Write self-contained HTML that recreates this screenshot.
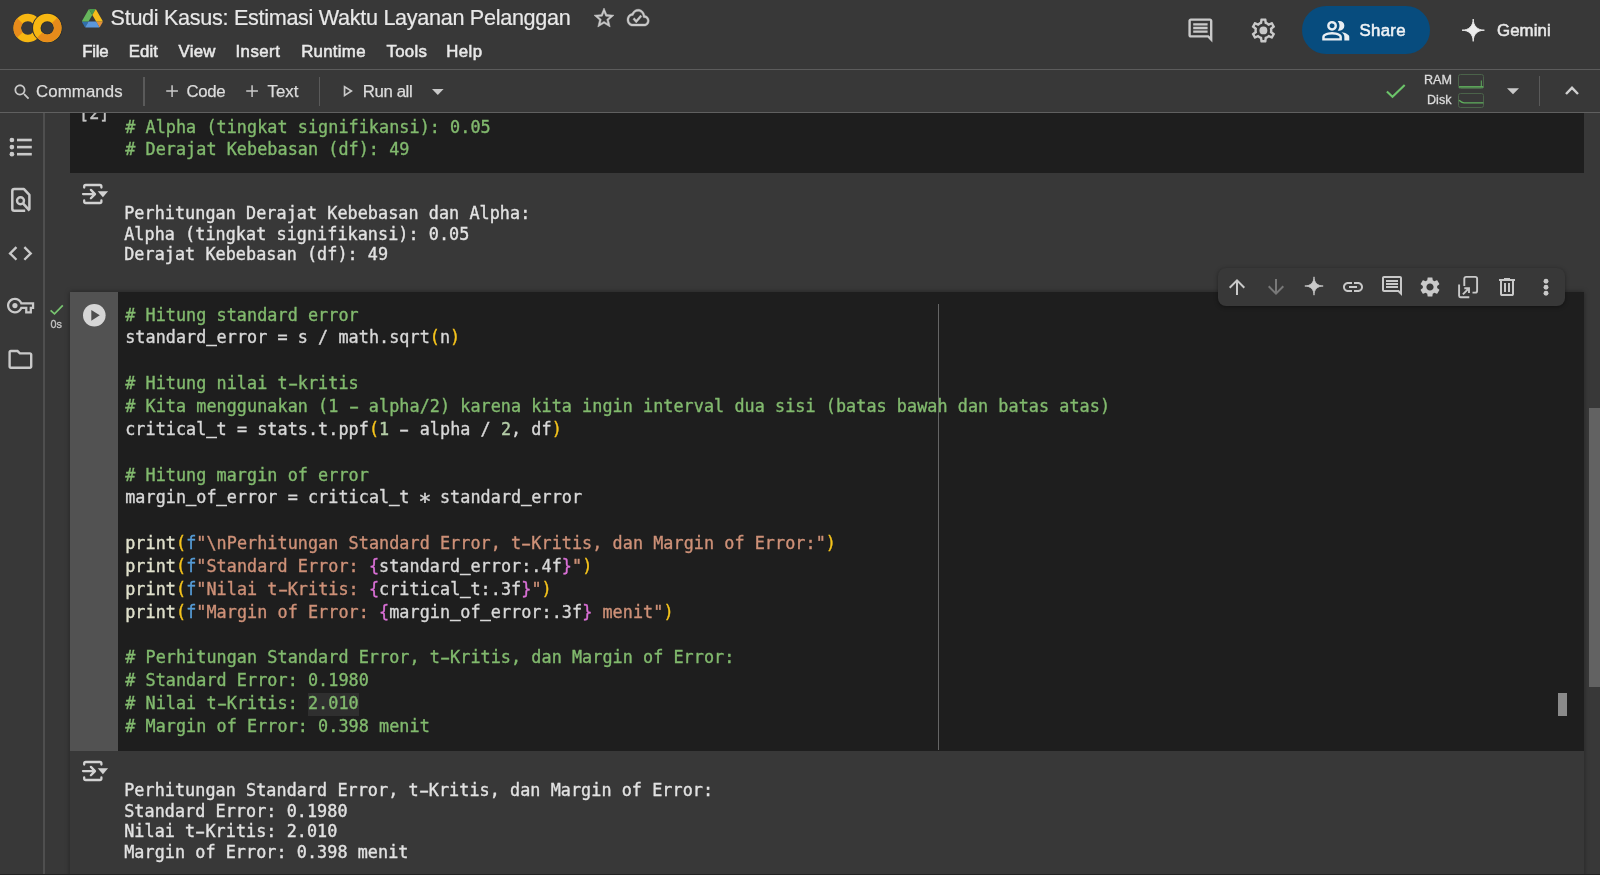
<!DOCTYPE html>
<html lang="id">
<head>
<meta charset="utf-8">
<title>Studi Kasus: Estimasi Waktu Layanan Pelanggan</title>
<style>
*{box-sizing:border-box;margin:0;padding:0}
html,body{width:1600px;height:875px;overflow:hidden;background:#383838}
body{position:relative;will-change:transform;font-family:"Liberation Sans",sans-serif;color:#e3e3e3}
.abs{position:absolute}
.t{position:absolute;white-space:pre;line-height:1}
svg{position:absolute;overflow:visible}
.ic{fill:#c9c9c9}
/* header */
#hdr{position:absolute;left:0;top:0;width:1600px;height:69px;background:#383838}
#hline{position:absolute;left:0;top:68.800px;width:1600px;height:1px;background:#5c5c5c}
#tbar{position:absolute;left:0;top:70px;width:1600px;height:42px;background:#383838}
#tline{position:absolute;left:0;top:112px;width:1600px;height:1.400px;background:#606060;z-index:5}
.menu{font-size:16.8px;font-weight:400;color:#e8e8e8;top:44.2px;-webkit-text-stroke:0.55px #e8e8e8}
.tb{font-size:16.8px;color:#dcdcdc;top:84.1px;-webkit-text-stroke:0.25px #dcdcdc}
/* sidebar */
#side{position:absolute;left:0;top:113px;width:43px;height:762px;background:#383838}
#sline{position:absolute;left:43px;top:113px;width:2px;height:762px;background:#4f4f4f}
/* cells */
.mono{font-family:"DejaVu Sans Mono","Liberation Mono",monospace;font-size:16.8px;white-space:pre;letter-spacing:0.05px;-webkit-text-stroke:0.36px currentColor}
.cell{position:absolute;left:70px;width:1514px;background:#1e1e1e}
.code{position:absolute;left:125.2px;white-space:normal}
.code div{height:22.85px;line-height:22.85px;white-space:pre}
.out{position:absolute;left:124.2px;color:#e2e2e2}
.h{display:inline-block;transform:scaleX(1.75)}
.u{display:inline-block;transform:translateY(-1px);-webkit-text-stroke:0.8px currentColor}
.a{display:inline-block;transform:translateY(4.600px) scale(1.280)}
.c{color:#82ba6e}
.d{color:#d8d8d8}
.y{color:#f6c41c}
.fn{color:#e0e1cc}
.b{color:#569cd6}
.s{color:#ce9178}
.p{color:#da70d6}
.n{color:#b5cea8}
</style>
</head>
<body>
<!--HEADER-->
<div id="hdr"></div>
<!-- colab logo -->
<svg style="left:0;top:0" width="80" height="60" viewBox="0 0 80 60">
  <g fill="none" stroke-width="7.5">
    <!-- C : yellow full arc, orange left segment -->
    <path d="M35.55 20.88 A10.5 10.5 0 1 0 35.55 34.92" stroke="#F7B712"/>
    <path d="M19.95 20.87 A10.5 10.5 0 0 0 19.95 34.93" stroke="#E78B1B"/>
    <!-- O -->
    <circle cx="47.3" cy="27.9" r="10.5" stroke="#2f2f2f" stroke-width="9.3"/>
    <circle cx="47.3" cy="27.9" r="10.5" stroke="#F7B712"/>
    <path d="M54.6 20.35 A10.5 10.5 0 0 1 39.75 35.2" stroke="#E78B1B"/>
  </g>
</svg>
<!-- drive icon -->
<svg style="left:82.3px;top:8.5px" width="20.7" height="18.5" viewBox="0 0 87.3 78">
  <path d="m6.6 66.85 3.85 6.65c.8 1.4 1.95 2.5 3.3 3.3l13.75-23.8h-27.5c0 1.55.4 3.1 1.2 4.5z" fill="#2f6fab"/>
  <path d="m43.65 25-13.75-23.8c-1.35.8-2.5 1.9-3.3 3.3l-25.4 44a9.06 9.06 0 0 0 -1.2 4.5h27.5z" fill="#66b55c"/>
  <path d="m73.55 76.8c1.35-.8 2.5-1.9 3.3-3.3l1.6-2.750 7.650-13.250c.8-1.400 1.200-2.950 1.200-4.500h-27.502l5.852 11.500z" fill="#e1913d"/>
  <path d="m43.65 25 13.750-23.800c-1.350-.8-2.900-1.200-4.500-1.200h-18.500c-1.600 0-3.150.45-4.500 1.200z" fill="#4a9a4e"/>
  <path d="m59.800 53h-32.300l-13.750 23.800c1.350.8 2.900 1.200 4.500 1.200h50.800c1.600 0 3.150-.45 4.500-1.200z" fill="#5b97db"/>
  <path d="m73.400 26.500-12.700-22c-.8-1.400-1.950-2.500-3.300-3.300l-13.750 23.800 16.150 28h27.450c0-1.550-.4-3.100-1.200-4.500z" fill="#f6bd1b"/>
</svg>
<span class="t" id="title" style="left:110.6px;top:7.3px;font-size:21.6px;letter-spacing:-0.3px;color:#e8e8e8;-webkit-text-stroke:0.2px #e8e8e8">Studi Kasus: Estimasi Waktu Layanan Pelanggan</span>
<!-- star -->
<svg class="ic" style="left:592.1px;top:6.2px;stroke:#c9c9c9;stroke-width:0.5" width="24" height="24" viewBox="0 0 24 24"><path d="M22 9.24l-7.19-.62L12 2 9.190 8.630 2 9.240l5.460 4.730L5.820 21 12 17.270 18.180 21l-1.630-7.030L22 9.240zM12 15.400l-3.760 2.270 1-4.280-3.320-2.880 4.380-.38L12 6.100l1.710 4.040 4.380.38-3.320 2.880 1 4.280L12 15.400z"/></svg>
<!-- cloud done -->
<svg class="ic" style="left:627.1px;top:5.2px;stroke:#c9c9c9;stroke-width:0.4" width="22.2" height="25.3" preserveAspectRatio="none" viewBox="0 0 24 24"><path d="M19.350 10.040C18.670 6.590 15.640 4 12 4 9.110 4 6.600 5.640 5.350 8.040 2.340 8.360 0 10.910 0 14c0 3.310 2.690 6 6 6h13c2.760 0 5-2.240 5-5 0-2.640-2.050-4.780-4.650-4.960zM19 18H6c-2.210 0-4-1.790-4-4 0-2.050 1.530-3.760 3.560-3.970l1.070-.11.5-.95C8.080 7.140 9.940 6 12 6c2.620 0 4.880 1.860 5.390 4.430l.3 1.500 1.530.11c1.560.1 2.780 1.410 2.780 2.960 0 1.650-1.350 3-3 3zm-9-3.820l-2.090-2.090L6.500 13.500 10 17l6.010-6.010-1.410-1.410z"/></svg>
<!-- menus -->
<span class="t menu" style="left:82.2px;letter-spacing:-0.25px">File</span>
<span class="t menu" style="left:128.8px;letter-spacing:0.05px">Edit</span>
<span class="t menu" style="left:178.6px;letter-spacing:0.22px">View</span>
<span class="t menu" style="left:235.4px;letter-spacing:0.5px">Insert</span>
<span class="t menu" style="left:301.2px;letter-spacing:0.3px">Runtime</span>
<span class="t menu" style="left:386.4px;letter-spacing:0.35px">Tools</span>
<span class="t menu" style="left:446.2px;letter-spacing:0.45px">Help</span>
<!-- comment icon -->
<svg class="ic" style="left:1186.2px;top:15.6px" width="28.8" height="28.8" viewBox="0 0 24 24"><path d="M21.990 4c0-1.100-.89-2-1.990-2H4c-1.100 0-2 .9-2 2v12c0 1.100.9 2 2 2h14l4 4-.01-18zM20 4v13.170L18.830 16H4V4h16zM6 12h12v2H6zm0-3h12v2H6zm0-3h12v2H6z"/></svg>
<!-- gear -->
<svg class="ic" style="left:1248.6px;top:15.6px" width="28.8" height="28.8" viewBox="0 0 24 24"><path d="M19.430 12.980c.04-.32.07-.64.07-.98 0-.34-.03-.66-.07-.98l2.110-1.650c.19-.15.24-.42.12-.64l-2-3.460c-.09-.16-.26-.25-.44-.25-.06 0-.12.010-.17.030l-2.490 1c-.52-.4-1.080-.73-1.690-.98l-.38-2.650C14.460 2.180 14.250 2 14 2h-4c-.25 0-.46.180-.49.420l-.38 2.650c-.61.250-1.170.59-1.690.98l-2.490-1c-.06-.02-.12-.03-.18-.03-.17 0-.34.090-.43.250l-2 3.460c-.13.220-.07.490.12.640l2.110 1.650c-.04.320-.07.650-.07.980 0 .33.030.66.070.98l-2.110 1.650c-.19.150-.24.420-.12.640l2 3.460c.09.160.26.250.44.250.06 0 .12-.01.170-.03l2.490-1c.52.4 1.080.73 1.690.98l.38 2.650c.03.240.24.420.49.420h4c.25 0 .46-.18.490-.42l.38-2.650c.61-.25 1.170-.59 1.690-.98l2.490 1c.06.020.12.030.18.030.17 0 .34-.09.430-.25l2-3.460c.12-.22.070-.49-.12-.64l-2.110-1.650zm-1.980-1.710c.04.310.05.520.05.730 0 .21-.02.430-.05.730l-.14 1.130.89.700 1.080.84-.7 1.210-1.270-.51-1.040-.42-.9.680c-.43.320-.84.560-1.250.73l-1.060.43-.16 1.130-.2 1.350h-1.400l-.19-1.350-.16-1.130-1.060-.43c-.43-.18-.83-.41-1.230-.71l-.91-.7-1.060.43-1.270.51-.7-1.210 1.080-.84.890-.7-.14-1.130c-.03-.31-.05-.54-.05-.74s.02-.43.050-.73l.14-1.130-.89-.7-1.080-.84.700-1.210 1.270.51 1.040.42.900-.68c.43-.32.840-.56 1.250-.73l1.060-.43.160-1.130.2-1.350h1.390l.19 1.350.16 1.130 1.060.43c.43.180.83.410 1.230.71l.91.700 1.060-.43 1.270-.51.700 1.210-1.070.85-.89.700.14 1.130z"/><circle cx="12" cy="12" r="3.3"/></svg>
<!-- share -->
<div class="abs" style="left:1302px;top:6px;width:128px;height:48px;border-radius:24px;background:#074c7e"></div>
<svg style="left:1320.8px;top:15.7px;fill:#e9eef3" width="29.5" height="29.5" viewBox="0 0 24 24"><path d="M1 20v-2.800q0-.85.438-1.562T2.600 14.550q1.550-.775 3.150-1.162T9 13t3.250.388 3.150 1.162q.725.375 1.163 1.088T17 17.200V20zm18 0v-3q0-1.100-.612-2.113T16.650 13.150q1.275.15 2.400.513t2.100.887q.9.500 1.375 1.112T23 17v3zM9 12q-1.650 0-2.825-1.175T5 8t1.175-2.825T9 4t2.825 1.175T13 8t-1.175 2.825T9 12m10-4q0 1.650-1.175 2.825T15 12q-.275 0-.7-.062t-.7-.138q.675-.8 1.038-1.775T15 8t-.362-2.025T13.600 4.200q.35-.125.700-.163T15 4q1.650 0 2.825 1.175T19 8M3 18h12v-.8q0-.275-.137-.5t-.363-.35q-1.350-.675-2.725-1.012T9 15t-2.775.338T3.500 16.350q-.225.125-.363.350T3 17.200zm6-8q.825 0 1.413-.587T11 8t-.587-1.412T9 6t-1.412.588T7 8t.588 1.413T9 10"/></svg>
<span class="t" style="left:1359.6px;top:22.8px;font-size:16.8px;font-weight:400;letter-spacing:0.3px;color:#f0f3f6;-webkit-text-stroke:0.55px #f0f3f6">Share</span>
<!-- gemini -->
<svg style="left:1460.6px;top:17.8px;fill:#ececec;stroke:#ececec;stroke-width:0.9;stroke-linejoin:round" width="24.4" height="24.4" viewBox="0 0 24 24"><path d="M12 1C12 7.800 16.200 12 23 12C16.200 12 12 16.200 12 23C12 16.200 7.800 12 1 12C7.800 12 12 7.800 12 1Z"/></svg>
<span class="t" style="left:1497px;top:22.8px;font-size:16.8px;font-weight:400;letter-spacing:0.1px;color:#e8e8e8;-webkit-text-stroke:0.55px #e8e8e8">Gemini</span>
<div id="hline"></div>
<!--/HEADER-->
<!--TOOLBAR-->
<div id="tbar"></div>
<svg class="ic" style="left:11.5px;top:81.5px" width="20.16" height="20.16" viewBox="0 0 24 24"><path d="M15.500 14h-.79l-.28-.27C15.410 12.590 16 11.110 16 9.500 16 5.910 13.090 3 9.500 3S3 5.910 3 9.500 5.910 16 9.500 16c1.610 0 3.090-.59 4.230-1.570l.27.28v.79l5 4.990L20.490 19l-4.990-5zm-6 0C7.010 14 5 11.990 5 9.500S7.010 5 9.500 5 14 7.010 14 9.500 11.990 14 9.500 14z"/></svg>
<span class="t tb" style="left:36px;letter-spacing:0.12px">Commands</span>
<div class="abs" style="left:143.4px;top:76.5px;width:1.4px;height:29px;background:#5a5a5a"></div>
<!-- + Code -->
<svg class="ic" style="left:161.9px;top:80.7px" width="20.16" height="20.16" viewBox="0 0 24 24"><path d="M19 12.900h-6.100V19h-1.800v-6.100H5v-1.800h6.100V5h1.800v6.100H19z"/></svg>
<span class="t tb" style="left:186.4px;letter-spacing:-0.3px">Code</span>
<svg class="ic" style="left:242.1px;top:80.700px" width="20.16" height="20.16" viewBox="0 0 24 24"><path d="M19 12.900h-6.100V19h-1.800v-6.100H5v-1.800h6.100V5h1.800v6.100H19z"/></svg>
<span class="t tb" style="left:267.6px">Text</span>
<div class="abs" style="left:319px;top:77px;width:1.4px;height:28.500px;background:#5a5a5a"></div>
<!-- run all -->
<svg class="ic" style="left:337.2px;top:80.9px" width="20.16" height="20.16" viewBox="0 0 24 24"><path d="M10 8.640L15.270 12 10 15.360V8.640M8 5v14l11-7L8 5z"/></svg>
<span class="t tb" style="left:362.8px;letter-spacing:-0.4px">Run all</span>
<svg class="ic" style="left:431.600px;top:88.6px" width="11.6" height="6" viewBox="0 0 10 5"><path d="M0 0l5 5 5-5z"/></svg>
<!-- right side -->
<svg style="left:1385.5px;top:83.600px" width="20" height="14.600" viewBox="0 0 20 14.600"><path d="M0.900 7.400L6.500 12.700L18.700 1" fill="none" stroke="#6cc46a" stroke-width="2.100"/></svg>
<span class="t" style="left:1424px;top:74.3px;font-size:12.6px;color:#dcdcdc;-webkit-text-stroke:0.3px #dcdcdc">RAM</span>
<span class="t" style="left:1427px;top:93.600px;font-size:12.6px;color:#dcdcdc;-webkit-text-stroke:0.3px #dcdcdc">Disk</span>
<div class="abs" style="left:1458px;top:73.600px;width:26.400px;height:15.200px;border:1px solid #4b634a;border-radius:2.500px"></div>
<svg style="left:1458px;top:73.600px" width="26.400" height="15.200" viewBox="0 0 26.4 15.2"><path d="M1 12.900H25.400" fill="none" stroke="#5fae5d" stroke-width="1.600"/><path d="M23.300 12.500V6.500" fill="none" stroke="#5fae5d" stroke-width="1"/></svg>
<div class="abs" style="left:1458px;top:93px;width:26.400px;height:15.200px;border:1px solid #4b634a;border-radius:2.500px"></div>
<svg style="left:1458px;top:93px" width="26.400" height="15.200" viewBox="0 0 26.4 15.2"><path d="M1 7.200C2.500 8.500 4 9.800 6 9.900H25.400" fill="none" stroke="#5fae5d" stroke-width="1.400"/></svg>
<svg class="ic" style="left:1507.300px;top:88px" width="12" height="6.500" viewBox="0 0 10 5"><path d="M0 0l5 5 5-5z"/></svg>
<div class="abs" style="left:1538.600px;top:76px;width:1.400px;height:30px;background:#5a5a5a"></div>
<svg style="left:1565.200px;top:86.300px" width="14" height="9" viewBox="0 0 14 9"><path d="M1 8L7 1.800L13 8" fill="none" stroke="#d0d0d0" stroke-width="2.400"/></svg>
<div id="tline"></div>
<!--/TOOLBAR-->
<!--SIDEBAR-->
<div id="side"></div><div id="sline"></div>
<!-- toc -->
<svg style="left:0;top:130px" width="44" height="34" viewBox="0 130 44 34"><g fill="#c9c9c9"><circle cx="11.900" cy="140" r="2.350"/><circle cx="11.900" cy="147.100" r="2.350"/><circle cx="11.900" cy="154.200" r="2.350"/><rect x="17" y="138.700" width="14.800" height="2.600"/><rect x="17" y="145.800" width="14.800" height="2.600"/><rect x="17" y="152.900" width="14.800" height="2.600"/></g></svg>
<!-- find in page -->
<svg style="left:0;top:180px" width="44" height="40" viewBox="0 180 44 40"><g fill="none" stroke="#c9c9c9" stroke-width="2.500" stroke-linejoin="round"><path d="M25.200 210.800H14.300Q12.300 210.800 12.300 208.800V191.100Q12.300 189.100 14.300 189.100H24L29.400 194.900V209.500"/><circle cx="20.500" cy="200.800" r="3.500" stroke-width="2.400"/><path d="M23 203.400L29.600 210.600" stroke-width="2.600"/></g></svg>
<!-- code -->
<svg class="ic" style="left:6.200px;top:238.600px" width="28.8" height="28.8" viewBox="0 0 24 24"><path d="M9.400 16.600L4.800 12l4.600-4.600L8 6l-6 6 6 6 1.400-1.400zm5.200 0l4.600-4.600-4.600-4.600L16 6l6 6-6 6-1.400-1.400z"/></svg>
<!-- key -->
<svg class="ic" style="left:7px;top:292.400px" width="27.2" height="27.2" viewBox="0 0 24 24"><path d="M22 19h-6v-4h-2.680c-1.140 2.420-3.600 4-6.320 4-3.860 0-7-3.140-7-7s3.140-7 7-7c2.720 0 5.170 1.580 6.320 4H24v6h-2v4zm-4-2h2v-4h2v-2H11.940l-.23-.67C11.010 8.340 9.110 7 7 7c-2.760 0-5 2.240-5 5s2.240 5 5 5c2.110 0 4.010-1.340 4.710-3.330l.23-.67H18v4z"/><circle cx="7" cy="12" r="2.300"/></svg>
<!-- folder -->
<svg class="ic" style="left:6.300px;top:344.600px" width="28.8" height="28.8" viewBox="0 0 24 24"><path d="M9.170 6l2 2H20v10H4V6h5.170M10 4H4c-1.100 0-1.990.9-1.990 2L2 18c0 1.100.9 2 2 2h16c1.100 0 2-.9 2-2V8c0-1.100-.9-2-2-2h-8l-2-2z"/></svg>
<!--/SIDEBAR-->
<!--CELLS-->
<!-- cell 1 (partially scrolled) -->
<div class="cell" style="top:113px;height:60px"></div>
<div class="abs" style="left:70px;top:113px;width:60px;height:10px;overflow:hidden"><span class="t mono" style="left:9px;top:-8.400px;color:#c4c4c4">[2]</span></div>
<div class="code mono" style="top:115.650px">
<div class="c"># Alpha (tingkat signifikansi): 0.05</div>
<div class="c"># Derajat Kebebasan (df): 49</div>
</div>
<!-- output 1 -->
<svg style="left:75px;top:178px" width="40" height="32" viewBox="0 0 40 32"><g fill="none" stroke="#d2d2d2" stroke-width="2.300" stroke-linecap="round" stroke-linejoin="round"><path d="M9.200 9.600V8.500Q9.200 7 10.700 7H24.900Q26.400 7 26.400 8.500V9.600"/><path d="M9.200 22.400V23.500Q9.200 25 10.700 25H24.900Q26.400 25 26.400 23.500V22.400"/><path d="M8 16.100H19.600M15.900 11.900L20 16.100L15.900 20.300"/></g><path d="M22.700 13.200H33.100L27.900 19.200z" fill="#d2d2d2"/></svg>
<div class="out mono" style="top:203.050px;line-height:20.450px">Perhitungan Derajat Kebebasan dan Alpha:
Alpha (tingkat signifikansi): 0.05
Derajat Kebebasan (df): 49</div>
<!-- cell 2 shadow + bg -->
<div class="abs" style="left:69.500px;top:291.500px;width:1514.500px;height:620px;background:#383838;box-shadow:0 0 5px rgba(0,0,0,0.38)"></div>
<div class="cell" style="top:291.500px;height:459px"></div>
<div class="abs" style="left:69.500px;top:291.500px;width:48.500px;height:459px;background:#525252"></div>
<!-- status -->
<svg style="left:49px;top:304px" width="16" height="12" viewBox="0 0 16 12"><path d="M1.600 6.400L5.500 9.900L13.800 1.400" fill="none" stroke="#78c470" stroke-width="1.700"/></svg>
<span class="t" style="left:50.500px;top:319px;font-size:10.800px;color:#c2c2c2;letter-spacing:-0.1px;-webkit-text-stroke:0.35px #c2c2c2">0s</span>
<!-- play button -->
<svg style="left:82.700px;top:304.200px" width="22.600" height="22.600" viewBox="0 0 22.600 22.600"><circle cx="11.300" cy="11.300" r="11.300" fill="#d6d6d6"/><path d="M8.300 5.900V16.700L16.800 11.300z" fill="#4e4e4e"/></svg>
<!-- ruler -->
<div class="abs" style="left:937.900px;top:303.700px;width:1px;height:446.800px;background:#656565"></div>
<!-- highlight -->
<div class="abs" style="left:307.600px;top:692.800px;width:51.200px;height:22.800px;background:#2f2f2f"></div>
<div class="code mono d" style="top:303.650px">
<div class="c"># Hitung standard error</div>
<div>standard<span class="u">_</span>error = s / math.sqrt<span class="y">(</span>n<span class="y">)</span></div>
<div> </div>
<div class="c"># Hitung nilai t<span class="h">-</span>kritis</div>
<div class="c"># Kita menggunakan (1 <span class="h">-</span> alpha/2) karena kita ingin interval dua sisi (batas bawah dan batas atas)</div>
<div>critical<span class="u">_</span>t = stats.t.ppf<span class="y">(</span><span class="n">1</span> <span class="h">-</span> alpha / <span class="n">2</span>, df<span class="y">)</span></div>
<div> </div>
<div class="c"># Hitung margin of error</div>
<div>margin<span class="u">_</span>of<span class="u">_</span>error = critical<span class="u">_</span>t <span class="a">*</span> standard<span class="u">_</span>error</div>
<div> </div>
<div><span class="fn">print</span><span class="y">(</span><span class="b">f</span><span class="s">"\nPerhitungan Standard Error, t<span class="h">-</span>Kritis, dan Margin of Error:"</span><span class="y">)</span></div>
<div><span class="fn">print</span><span class="y">(</span><span class="b">f</span><span class="s">"Standard Error: </span><span class="p">{</span>standard<span class="u">_</span>error:.4f<span class="p">}</span><span class="s">"</span><span class="y">)</span></div>
<div><span class="fn">print</span><span class="y">(</span><span class="b">f</span><span class="s">"Nilai t<span class="h">-</span>Kritis: </span><span class="p">{</span>critical<span class="u">_</span>t:.3f<span class="p">}</span><span class="s">"</span><span class="y">)</span></div>
<div><span class="fn">print</span><span class="y">(</span><span class="b">f</span><span class="s">"Margin of Error: </span><span class="p">{</span>margin<span class="u">_</span>of<span class="u">_</span>error:.3f<span class="p">}</span><span class="s"> menit"</span><span class="y">)</span></div>
<div> </div>
<div class="c"># Perhitungan Standard Error, t<span class="h">-</span>Kritis, dan Margin of Error:</div>
<div class="c"># Standard Error: 0.1980</div>
<div class="c"># Nilai t<span class="h">-</span>Kritis: 2.010</div>
<div class="c"># Margin of Error: 0.398 menit</div>
</div>
<!-- minimap marker -->
<div class="abs" style="left:1558px;top:693px;width:9px;height:23px;background:#8a8a8a"></div>
<!-- output 2 -->
<svg style="left:75px;top:755.200px" width="40" height="32" viewBox="0 0 40 32"><g fill="none" stroke="#d2d2d2" stroke-width="2.300" stroke-linecap="round" stroke-linejoin="round"><path d="M9.200 9.600V8.500Q9.200 7 10.700 7H24.900Q26.400 7 26.400 8.500V9.600"/><path d="M9.200 22.400V23.500Q9.200 25 10.700 25H24.900Q26.400 25 26.400 23.500V22.400"/><path d="M8 16.100H19.600M15.900 11.900L20 16.100L15.900 20.300"/></g><path d="M22.700 13.200H33.100L27.900 19.200z" fill="#d2d2d2"/></svg>
<div class="out mono" style="top:780.150px;line-height:20.600px">Perhitungan Standard Error, t<span class="h">-</span>Kritis, dan Margin of Error:
Standard Error: 0.1980
Nilai t<span class="h">-</span>Kritis: 2.010
Margin of Error: 0.398 menit</div>
<!-- scrollbar -->
<div class="abs" style="left:1589px;top:408px;width:11px;height:279px;background:#626262"></div>
<!-- cell toolbar -->
<div class="abs" style="left:1218px;top:267.500px;width:347px;height:38.500px;border-radius:8px;background:#383838;box-shadow:0 1px 4px rgba(0,0,0,0.4)"></div>
<svg class="ic" style="left:1225.300px;top:275px" width="24" height="24" viewBox="0 0 24 24"><path d="M4 12l1.410 1.410L11 7.830V20h2V7.830l5.580 5.590L20 12l-8-8-8 8z"/></svg>
<svg style="left:1264px;top:275px;fill:#787878" width="24" height="24" viewBox="0 0 24 24"><path d="M20 12l-1.410-1.410L13 16.170V4h-2v12.170l-5.580-5.590L4 12l8 8 8-8z"/></svg>
<svg class="ic" style="left:1304.400px;top:276.400px;stroke:#c9c9c9;stroke-width:1;stroke-linejoin:round" width="20" height="20" viewBox="0 0 24 24"><path d="M12 1C12 7.800 16.200 12 23 12C16.200 12 12 16.200 12 23C12 16.200 7.800 12 1 12C7.800 12 12 7.800 12 1Z"/></svg>
<svg class="ic" style="left:1341px;top:274.500px" width="24" height="24" viewBox="0 0 24 24"><path d="M3.900 12c0-1.710 1.390-3.100 3.100-3.100h4V7H7c-2.760 0-5 2.240-5 5s2.240 5 5 5h4v-1.900H7c-1.710 0-3.100-1.390-3.100-3.100zM8 13h8v-2H8v2zm9-6h-4v1.900h4c1.710 0 3.100 1.390 3.100 3.100s-1.390 3.100-3.100 3.100h-4V17h4c2.760 0 5-2.240 5-5s-2.240-5-5-5z"/></svg>
<svg class="ic" style="left:1379.700px;top:274.400px" width="24" height="24" viewBox="0 0 24 24"><path d="M21.990 4c0-1.100-.89-2-1.990-2H4c-1.100 0-2 .9-2 2v12c0 1.100.9 2 2 2h14l4 4-.01-18zM20 4v13.170L18.830 16H4V4h16zM6 12h12v2H6zm0-3h12v2H6zm0-3h12v2H6z"/></svg>
<svg class="ic" style="left:1418.100px;top:274.800px" width="24" height="24" viewBox="0 0 24 24"><path d="M19.140 12.940c.04-.3.060-.61.060-.94 0-.32-.02-.64-.07-.94l2.030-1.580c.18-.14.230-.41.120-.61l-1.920-3.320c-.12-.22-.37-.29-.59-.22l-2.390.96c-.5-.38-1.030-.7-1.620-.94l-.36-2.540c-.04-.24-.24-.41-.48-.41h-3.840c-.24 0-.43.170-.47.410l-.36 2.540c-.59.240-1.130.57-1.620.94l-2.390-.96c-.22-.08-.47 0-.59.220L2.740 8.870c-.12.210-.08.470.12.610l2.030 1.580c-.05.300-.09.630-.09.940s.02.640.07.940l-2.030 1.580c-.18.140-.23.410-.12.610l1.920 3.320c.12.220.37.290.59.220l2.390-.96c.5.380 1.030.7 1.620.94l.36 2.540c.05.240.24.410.48.410h3.840c.24 0 .44-.17.470-.41l.36-2.540c.59-.24 1.130-.56 1.620-.94l2.390.96c.22.080.47 0 .59-.22l1.920-3.320c.12-.22.070-.47-.12-.61l-2.010-1.580zM12 15.600c-1.980 0-3.600-1.620-3.600-3.600s1.620-3.600 3.600-3.600 3.600 1.620 3.600 3.600-1.620 3.600-3.600 3.600z"/></svg>
<!-- mirror cell -->
<svg style="left:1456.300px;top:274.800px" width="24" height="24" viewBox="0 0 24 24"><g fill="none" stroke="#c9c9c9" stroke-width="1.900"><path d="M8.300 11V3.800Q8.300 1.900 10.200 1.900H19.200Q21.100 1.900 21.100 3.800V15.700Q21.100 17.600 19.200 17.600H16.500"/><path d="M3.100 9.500V20.800Q3.100 22.200 4.500 22.200H13.300"/><path d="M6.900 19.300L12.700 13.500M8.300 13.200H13V17.900"/></g></svg>
<!-- delete -->
<svg class="ic" style="left:1495.200px;top:275px" width="24" height="24" viewBox="0 0 24 24"><path d="M7 21q-.825 0-1.413-.587T5 19V6H4V4h5V3h6v1h5v2h-1v13q0 .825-.587 1.413T17 21zM17 6H7v13h10zM9 17h2V8H9zm4 0h2V8h-2z"/></svg>
<svg class="ic" style="left:1533.600px;top:274.800px" width="24" height="24" viewBox="0 0 24 24"><circle cx="12" cy="6.200" r="2.450"/><circle cx="12" cy="12.200" r="2.450"/><circle cx="12" cy="18.200" r="2.450"/></svg>
<div class="abs" style="left:0;top:874px;width:1600px;height:1px;background:#232323"></div>
<!--/CELLS-->
</body>
</html>
